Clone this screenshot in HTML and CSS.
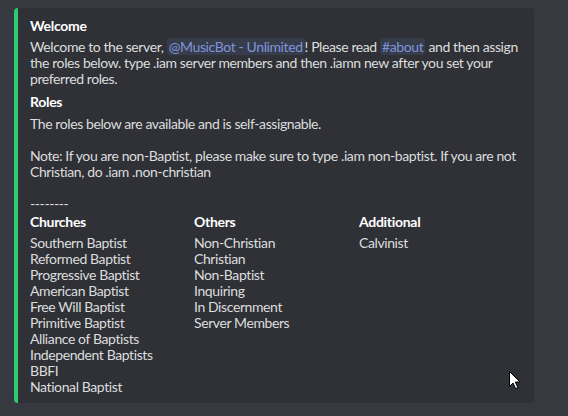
FILE: index.html
```html
<!DOCTYPE html>
<html>
<head><meta charset="utf-8"><link rel="stylesheet" href="styles.css"></head>
<body>
<div class="page">
  <div class="embed">
    <div class="title">Welcome</div>
    <div class="desc">Welcome to the server, <span class="mention">@MusicBot - Unlimited</span>! Please read <span class="mention">#about</span> and then assign<br>the roles below. type .iam server members and then .iamn new after you set your<br>preferred roles.</div>
    <div class="field">
      <div class="name">Roles</div>
      <div class="value">The roles below are available and is self-assignable.<br><br>Note: If you are non-Baptist, please make sure to type .iam non-baptist. If you are not<br>Christian, do .iam .non-christian<br><br>--------</div>
    </div>
    <div class="columns">
      <div class="col">
        <div class="name">Churches</div>
        <div class="value">Southern Baptist<br>Reformed Baptist<br>Progressive Baptist<br>American Baptist<br>Free Will Baptist<br>Primitive Baptist<br>Alliance of Baptists<br>Independent Baptists<br>BBFI<br>National Baptist</div>
      </div>
      <div class="col">
        <div class="name">Others</div>
        <div class="value">Non-Christian<br>Christian<br>Non-Baptist<br>Inquiring<br>In Discernment<br>Server Members</div>
      </div>
      <div class="col">
        <div class="name">Additional</div>
        <div class="value">Calvinist</div>
      </div>
    </div>
  </div>
  <svg class="cursor" width="13" height="20" viewBox="0 0 13 20"><path d="M1.5 1.5 L1.5 16.5 L5 13 L7.6 18.6 L9.9 17.6 L7.3 12 L12 12 Z" fill="#fff" stroke="#000" stroke-width="1" stroke-linejoin="miter"/></svg>
</div>
</body>
</html>
```
FILE: styles.css
```css
html, body { margin: 0; padding: 0; }
body {
  background: #36393f;
  width: 568px;
  height: 416px;
  overflow: hidden;
  font-family: "Lato", "Noto Sans", sans-serif;
  font-size: 14px;
  letter-spacing: -0.4px;
  color: #dcddde;
}
.page {
  position: relative;
  padding: 8px 0 0 14px;
}
.embed {
  box-sizing: border-box;
  width: 520px;
  background: #2f3136;
  border-left: 4px solid #2ecc71;
  border-radius: 4px;
  padding: 9px 8px 8px 12px;
}
.title, .name {
  color: #ffffff;
  font-weight: 700;
  line-height: 18px;
  letter-spacing: -0.3px;
}
.title { margin-bottom: 4px; }
.desc, .value {
  line-height: 16px;
  white-space: nowrap;
}
.field { margin-top: 6px; }
.field .name { margin-bottom: 5px; }
.columns {
  margin-top: 1px;
  display: grid;
  grid-template-columns: 164px 165px 1fr;
}
.col .name { margin-bottom: 4px; }
.mention {
  color: #7f94dc;
  background: rgba(114, 137, 218, 0.12);
  border-radius: 3px;
  padding: 0 2px;
}
.cursor {
  position: absolute;
  left: 508px;
  top: 370px;
}
```
